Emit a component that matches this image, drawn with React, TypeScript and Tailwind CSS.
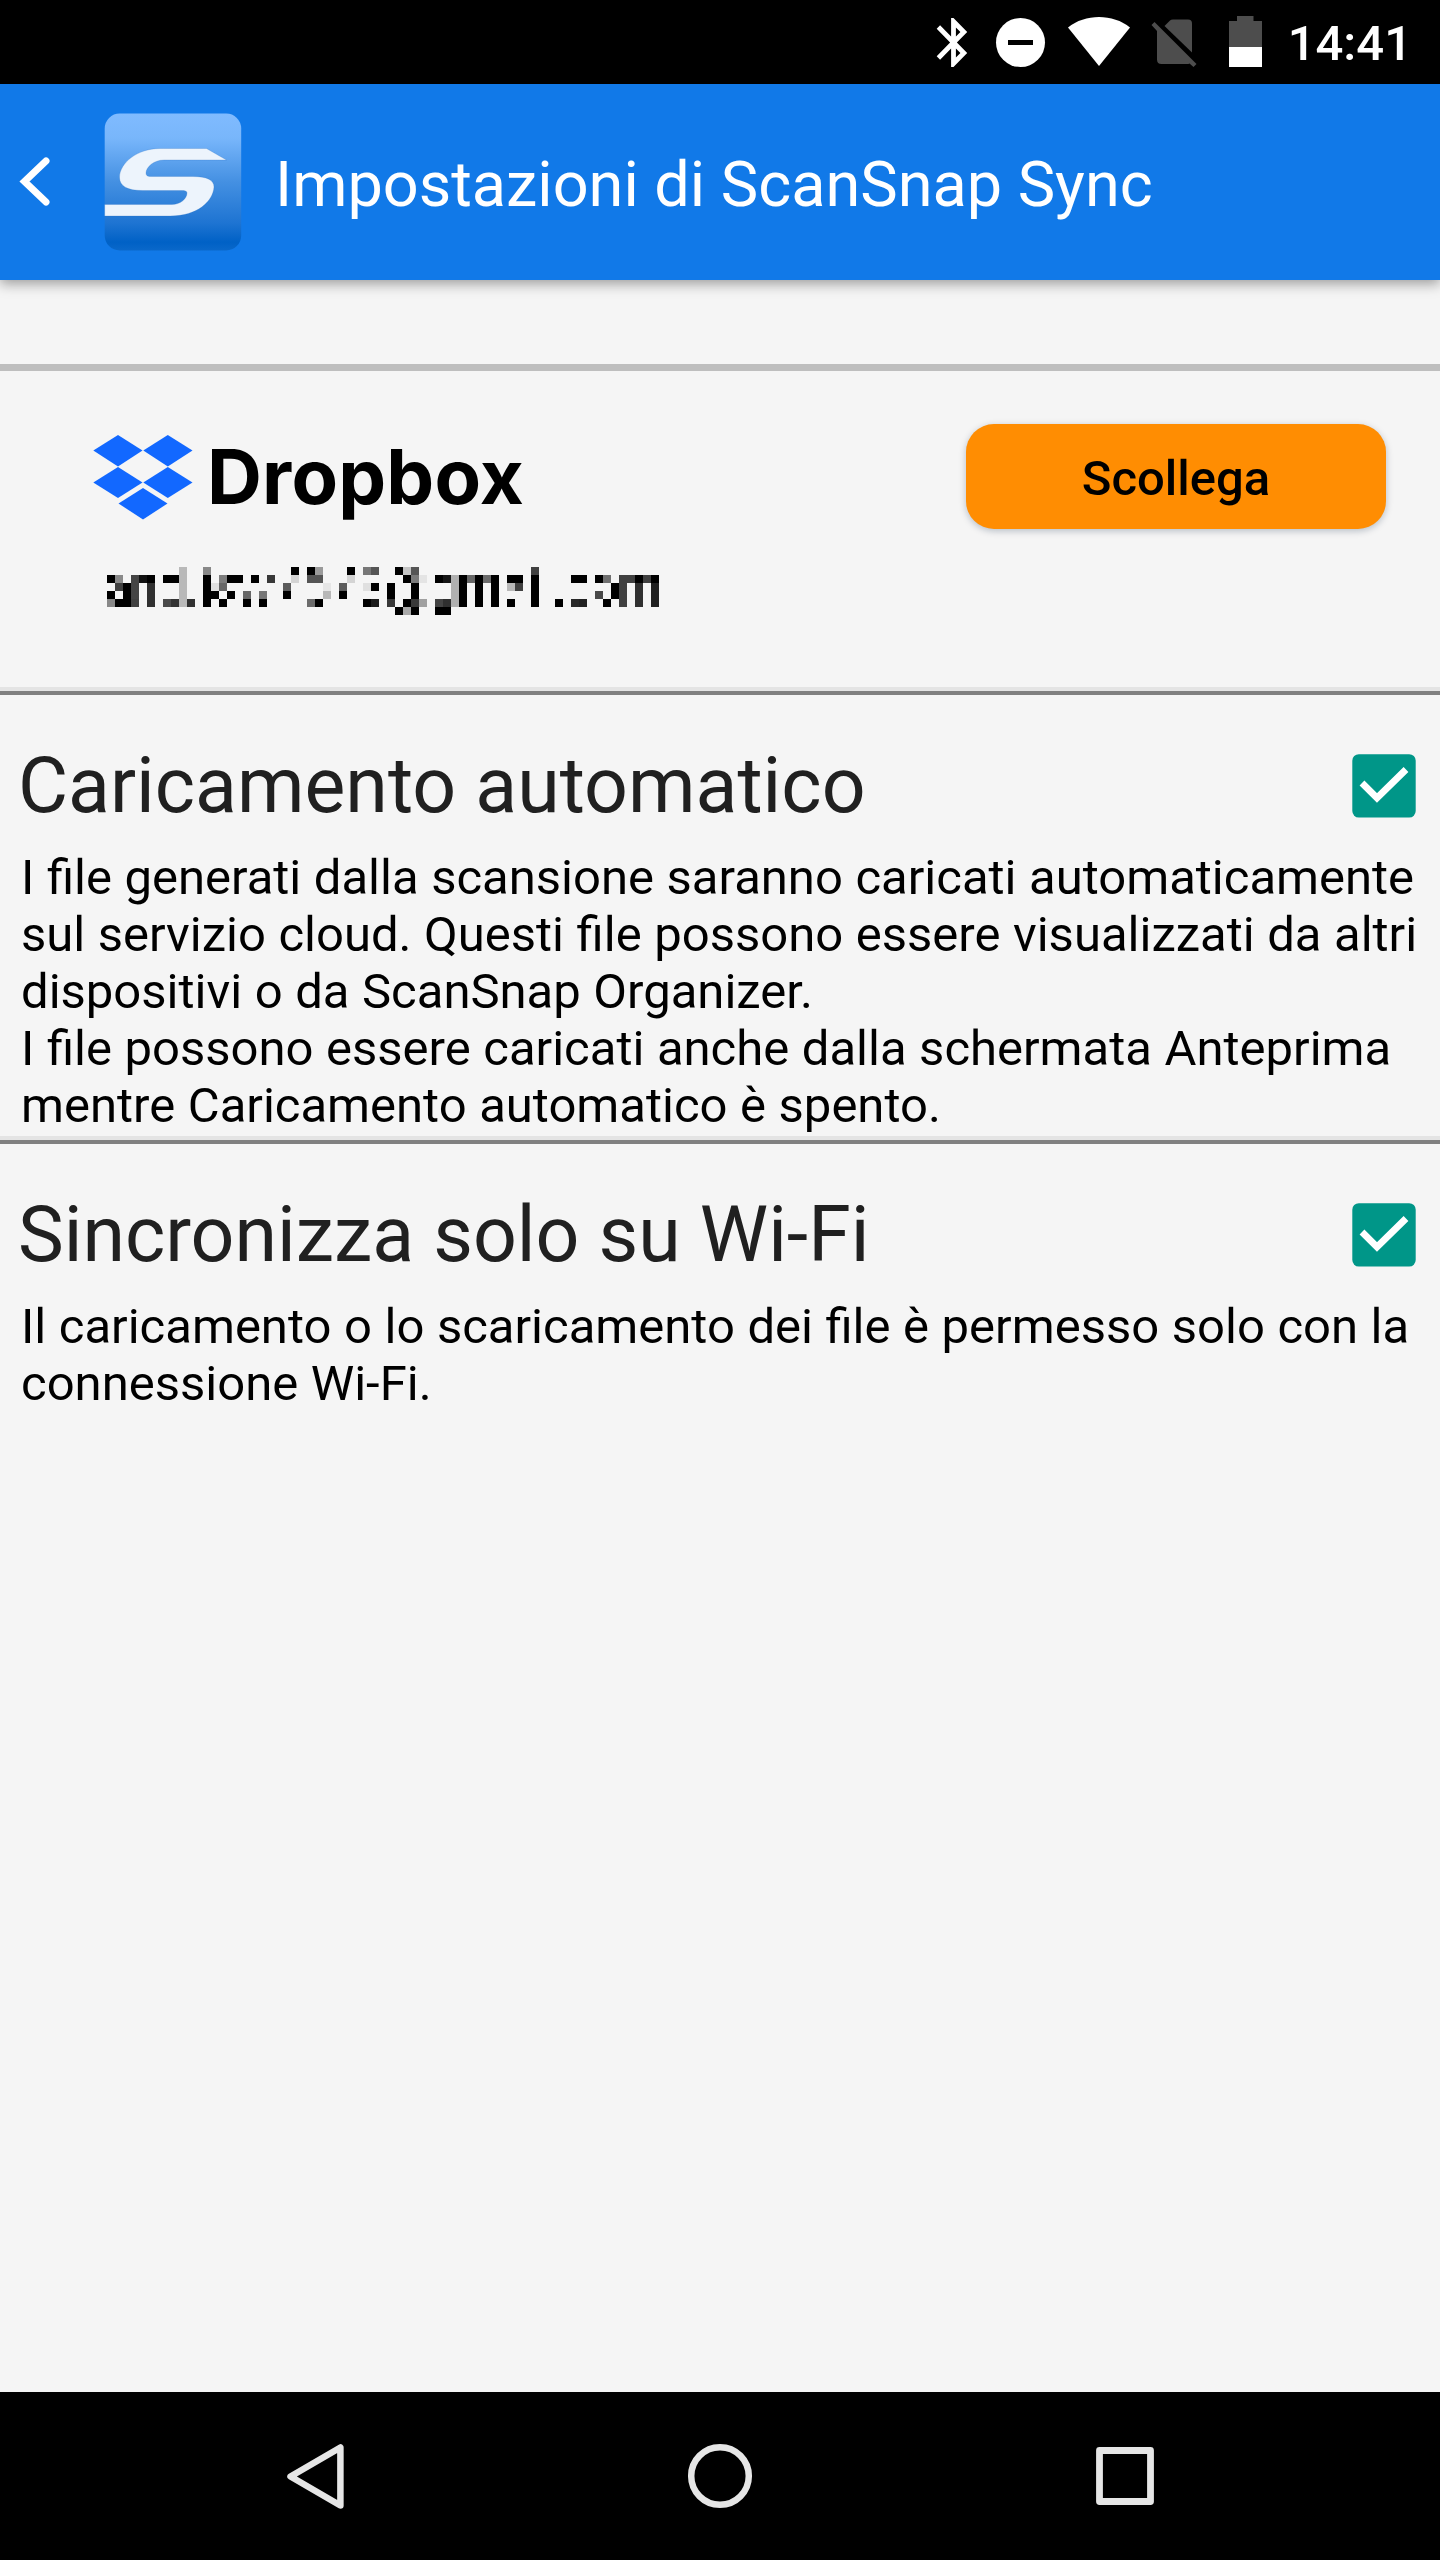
const MOSAIC: [number, string][][] = [
  [[9, 'b9'], [12, '88'], [23, '00'], [25, '00'], [26, '9a'], [30, '00'], [32, '77'], [33, '55'], [36, '00'], [37, 'c4'], [38, '55'], [53, '40']],
  [[0, '00'], [1, '8a'], [3, '44'], [4, '11'], [5, '00'], [7, '00'], [8, '00'], [9, 'b9'], [12, '00'], [14, '7d'], [15, '00'], [16, '00'], [18, '00'], [20, '38'], [23, 'd4'], [25, '55'], [26, '55'], [30, 'd4'], [37, '00'], [38, '7b'], [39, 'e4'], [41, '00'], [42, '15'], [43, 'b0'], [44, '00'], [45, '66'], [46, '00'], [47, '6b'], [48, '00'], [50, '00'], [51, '00'], [53, '00'], [58, '00'], [59, '00'], [61, '00'], [62, '70'], [64, '40'], [65, '40'], [66, '00'], [67, '40'], [68, '00']],
  [[1, '40'], [2, '00'], [3, '44'], [5, '30'], [9, 'b9'], [12, '00'], [13, 'e0'], [14, '66'], [22, '5c'], [27, 'e6'], [29, '5c'], [32, 'e0'], [33, '00'], [35, '00'], [38, '00'], [43, 'b0'], [44, '00'], [46, '00'], [48, '00'], [50, 'b8'], [51, '40'], [53, '00'], [63, '00'], [64, '40'], [66, '30'], [68, '20']],
  [[0, '00'], [2, '00'], [3, '44'], [5, '30'], [9, 'b9'], [12, '00'], [13, '00'], [15, '00'], [17, '66'], [19, '77'], [22, '00'], [27, 'b8'], [29, '00'], [35, '00'], [38, '00'], [43, 'b0'], [44, '00'], [46, '00'], [48, '00'], [53, '00'], [61, '48'], [63, '00'], [64, '40'], [66, '30'], [68, '20']],
  [[0, '88'], [1, '00'], [2, '00'], [3, '40'], [5, '30'], [7, '4a'], [8, '33'], [9, 'b9'], [10, '30'], [12, '00'], [14, '00'], [17, '00'], [19, '00'], [25, '6c'], [26, '00'], [32, '00'], [33, '1a'], [35, '38'], [37, '00'], [38, '38'], [39, 'a0'], [41, '44'], [42, '30'], [43, 'b0'], [44, '00'], [46, '00'], [48, '00'], [50, '00'], [53, '00'], [56, '00'], [58, '28'], [59, '22'], [62, '00'], [64, '40'], [66, '30'], [68, '20']],
  [[36, '00'], [37, 'a8'], [38, '00'], [41, '00'], [42, '00']],
];

function StatusBar() {
  return (
    <div className="flex h-[84px] items-start justify-end bg-black pr-[28px]">
      <svg className="mt-[16px] mr-[24px] h-[53px] w-[330px]" viewBox="934 16 330 53">
        <path
          transform="translate(924.7 13.1) scale(2.4 2.45)"
          d="M17.710 7.710L12 2h-1v7.590L6.410 5 5 6.410 10.590 12 5 17.590 6.410 19 11 14.410V22h1l5.710-5.710-4.300-4.290 4.300-4.290zM13 5.830l1.880 1.880L13 9.590V5.830zm1.880 10.460L13 18.170v-3.760l1.880 1.880z"
          fill="#fff"
        />
        <circle cx="1020.5" cy="42.5" r="24.5" fill="#fff" />
        <rect x="1008" y="40" width="25" height="5" />
        <path d="M1099 66 L1068 27.500 C1085 13.500 1113 13.500 1130 27.500 Z" fill="#fff" />
        <path d="M1164.500 26 L1170 20.500 Q1171 19.500 1173 19.500 H1188 Q1192 19.500 1192 23.500 V52.500 Z" fill="#4d4d4d" />
        <path d="M1154.500 22 L1196.500 64 L1193.500 67 L1189.500 63.500 Q1188.500 64 1187 64 H1161.500 Q1157 64 1157 59.500 V31 L1151.500 25 Z" fill="#4d4d4d" />
        <path d="M1229 47 V21 H1237 V16 H1253.500 V21 H1262 V47 Z" fill="#4d4d4d" />
        <rect x="1229" y="47" width="33" height="20" fill="#fff" />
      </svg>
      <span className="mt-[15px] text-[49px] leading-[57px] font-medium text-white">14:41</span>
    </div>
  );
}

function Header() {
  return (
    <header className="relative flex h-[196px] items-start bg-[#1179e8] shadow-[0_4px_12px_rgba(0,0,0,0.36)]">
      <svg className="mt-[70px] ml-[17px] h-[56px] w-[36px]" viewBox="17 154 36 56">
        <path d="M46 161 L24.500 181.500 L46 202" fill="none" stroke="#fff" strokeWidth="7" strokeLinecap="round" />
      </svg>
      <svg className="mt-[29px] ml-[51px] h-[138px] w-[138px]" viewBox="0 0 138 138">
        <defs>
          <linearGradient id="tile" x1="0" y1="0" x2="0" y2="1">
            <stop offset="0" stopColor="#80bbff" />
            <stop offset="0.18" stopColor="#78b6fb" />
            <stop offset="0.5" stopColor="#4490e2" />
            <stop offset="0.8" stopColor="#1e74d2" />
            <stop offset="0.94" stopColor="#0061c6" />
            <stop offset="1" stopColor="#0a68ca" />
          </linearGradient>
        </defs>
        <rect x="0.700" y="0.500" width="136.500" height="137" rx="15" fill="url(#tile)" />
        <path
          d="M0.700 91.500 H68 C76 91.500 83 86 83 80 C83 78 81 77.500 77 77.500 H39 C23 77.500 15.500 73 15.500 64 C16 50 33 35.500 56 35.500 H102.500 L122.500 47 H60 C50 47 42 54 42 60 C42 63 44 63.500 48 63.500 H89 C103 63.500 110 67 110 74 C109 88 94 103 66 103 H0.700 Z"
          fill="#edf4fc"
          stroke="#2b6fc0"
          strokeOpacity="0.35"
          strokeWidth="0.700"
        />
      </svg>
      <h1 className="mt-[64px] ml-[33px] text-[63px] leading-[74px] whitespace-nowrap text-white">
        Impostazioni di ScanSnap Sync
      </h1>
    </header>
  );
}

function Account() {
  return (
    <section className="flex h-[316px] items-start justify-between pr-[54px] pl-[93px]">
      <div>
        <div className="mt-[64px] flex h-[86px] items-start">
          <svg className="h-[86px] w-[100px] shrink-0" viewBox="93 435 100 86" fill="#1268ff">
            <path d="M118 435 L142.500 450.500 L118 466.500 L93.300 450.500 Z" />
            <path d="M167.800 435 L192.500 450.500 L167.800 466.500 L143.300 450.500 Z" />
            <path d="M118 467 L142.500 482.500 L118 498 L93.300 482.500 Z" />
            <path d="M167.800 467 L192.500 482.500 L167.800 498 L143.300 482.500 Z" />
            <path d="M143 488 L167.500 503.500 L143 519.500 L118.500 503.500 Z" />
          </svg>
          <span className="mt-[-4px] ml-[14px] font-[Inter] text-[76px] leading-[90px] font-bold tracking-[0.200px] text-black">
            Dropbox
          </span>
        </div>
        <svg
          className="mt-[46px] ml-[14px] h-[48px] w-[552px]"
          viewBox="0 0 69 6"
          shapeRendering="crispEdges"
          role="img"
          aria-label="Indirizzo e-mail oscurato"
        >
          {MOSAIC.map((row, y) =>
            row.map(([x, tone]) => <rect key={`${x}-${y}`} x={x} y={y} width="1" height="1" fill={`#${tone}${tone}${tone}`} />),
          )}
        </svg>
      </div>
      <button className="mt-[53px] h-[105px] w-[420px] rounded-[28px] bg-[#ff8d02] pt-[3px] text-[49px] leading-[57px] font-medium text-black shadow-[0_2px_7px_rgba(0,30,60,0.26)]">
        Scollega
      </button>
    </section>
  );
}

function Divider() {
  return <div className="h-[8px] border-t-4 border-b-4 border-t-[#e4e4e4] border-b-[#808080]" />;
}

function Setting({ title, lines }: { title: string; lines: string[] }) {
  return (
    <section className="pt-[46px] pr-[24px] pl-[18px]">
      <div className="flex h-[108px] items-start justify-between">
        <h2 className="text-[77px] leading-[90px] whitespace-nowrap text-[#202020]">{title}</h2>
        <svg className="mt-[13px] h-[64px] w-[64px]" viewBox="0 0 64 64">
          <rect x="0.300" y="0.200" width="63.400" height="63.400" rx="6.500" fill="#009688" />
          <path d="M10 29 L25 44 L54 15.500" fill="none" stroke="#fff" strokeWidth="6.800" />
        </svg>
      </div>
      <p className="pl-[3px] text-[49px] leading-[57px] [word-spacing:0.4px] whitespace-nowrap text-black">
        {lines.map((line) => (
          <span key={line} className="block">
            {line}
          </span>
        ))}
      </p>
    </section>
  );
}

function NavBar() {
  return (
    <nav className="flex h-[168px] items-center justify-center gap-[340px] bg-black">
      <svg className="h-[70px] w-[64px]" viewBox="283 2441 64 70" fill="none" stroke="#e6e6e6" strokeWidth="6.500" strokeLinejoin="round">
        <path d="M340.400 2447.500 V2505.500 L290.500 2476.500 Z" />
      </svg>
      <svg className="h-[66px] w-[66px]" viewBox="0 0 66 66" fill="none" stroke="#e6e6e6" strokeWidth="6.500">
        <circle cx="33" cy="33" r="28.800" />
      </svg>
      <svg className="h-[64px] w-[64px]" viewBox="0 0 64 64" fill="none" stroke="#e6e6e6" strokeWidth="6.800" strokeLinejoin="round">
        <rect x="6.500" y="6.500" width="51" height="51" />
      </svg>
    </nav>
  );
}

export default function App() {
  return (
    <div className="flex h-[2560px] w-[1440px] flex-col overflow-hidden bg-[#f5f5f5] font-[Roboto,sans-serif]">
      <StatusBar />
      <Header />
      <main className="flex flex-1 flex-col">
        <div className="mt-[84px] h-[7px] shrink-0 bg-[#bebebe]" />
        <Account />
        <Divider />
        <div className="h-[441px]">
          <Setting
            title="Caricamento automatico"
            lines={[
              'I file generati dalla scansione saranno caricati automaticamente',
              'sul servizio cloud. Questi file possono essere visualizzati da altri',
              'dispositivi o da ScanSnap Organizer.',
              'I file possono essere caricati anche dalla schermata Anteprima',
              'mentre Caricamento automatico è spento.',
            ]}
          />
        </div>
        <Divider />
        <Setting
          title="Sincronizza solo su Wi-Fi"
          lines={['Il caricamento o lo scaricamento dei file è permesso solo con la', 'connessione Wi-Fi.']}
        />
      </main>
      <NavBar />
    </div>
  );
}
